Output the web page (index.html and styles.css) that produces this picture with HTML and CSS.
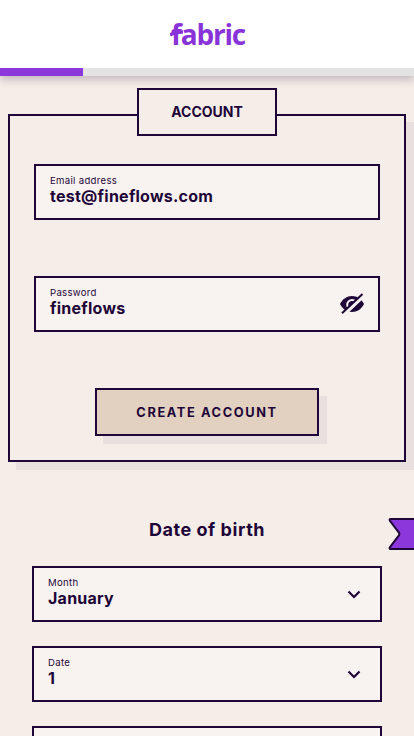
FILE: index.html
```html
<!DOCTYPE html>
<html lang="en">
<head>
  <meta charset="UTF-8">
  <meta name="viewport" content="width=device-width, initial-scale=1.0">
  <title>Create account</title>
  <link rel="stylesheet" href="styles.css">
</head>
<body>
  <header class="header">
    <div class="logo">
      <span class="logo-text">fabric<svg class="logo-bar" width="14" height="8" viewBox="0 0 14 8"><path d="M0 6C3 4 8 3 13 3"/></svg></span>
    </div>
    <div class="progress"><div class="progress-bar"></div></div>
  </header>

  <main>
    <form class="account">
      <h1 class="account-title">ACCOUNT</h1>
      <label class="field">
        <span class="field-label">Email address</span>
        <span class="field-value">test@fineflows.com</span>
      </label>
      <label class="field">
        <span class="field-label">Password</span>
        <span class="field-value">fineflows</span>
        <svg class="eye" width="26" height="22" viewBox="0 0 26 22">
          <path class="eye-shape" d="M1 11C3.500 6 7.800 3 13 3s9.500 3 12 8c-2.500 5-6.800 8-12 8S3.500 16 1 11z"/>
          <path class="eye-ring" d="M9 14.500C6.500 9.500 11 5.500 15.500 7.500"/>
          <path class="eye-gap" d="M4.700 21.500L24.700 2.500"/>
          <path class="eye-slash" d="M3 20.300L23.500 1"/>
        </svg>
      </label>
      <button class="submit" type="button">CREATE ACCOUNT</button>
    </form>

    <section class="birth">
      <div class="birth-head">
        <h2 class="birth-title">Date of birth</h2>
        <svg class="ribbon" width="27" height="34" viewBox="0 0 27 34">
          <path d="M40 2H3.500C2.500 2 2.300 3 3 3.800L11.500 15c1.300 1.500 1.300 2.500 0 4L3 30.200C2.300 31 2.500 32 3.500 32H40z"/>
        </svg>
      </div>
      <label class="field">
        <span class="field-label">Month</span>
        <span class="field-value">January</span>
        <svg class="chevron" width="14" height="10" viewBox="0 0 14 10"><path d="M1.500 2.500L7 8 12.500 2.500"/></svg>
      </label>
      <label class="field">
        <span class="field-label">Date</span>
        <span class="field-value">1</span>
        <svg class="chevron" width="14" height="10" viewBox="0 0 14 10"><path d="M1.500 2.500L7 8 12.500 2.500"/></svg>
      </label>
      <label class="field"></label>
    </section>
  </main>
</body>
</html>
```
FILE: styles.css
```css
* {
  box-sizing: border-box;
}

body {
  margin: 0;
  height: 100vh;
  overflow: hidden;
  background-color: #f5ede8;
  color: #1e0638;
  font-family: Inter, "Liberation Sans", sans-serif;
}

.header {
  background-color: #fff;
  box-shadow: 0 4px 8px rgba(30, 6, 56, 0.22);
}

.logo {
  display: flex;
  justify-content: center;
  height: 68px;
  padding-top: 13px;
}

.logo-text {
  position: relative;
  height: 40px;
  padding-left: 2px;
  color: #8934d9;
  font-family: "Open Sans", sans-serif;
  font-size: 28px;
  font-weight: 700;
  line-height: 42px;
  letter-spacing: -1.2px;
}

.logo-bar {
  position: absolute;
  top: 16px;
  left: 1px;
}

.logo-bar path {
  fill: none;
  stroke: #8934d9;
  stroke-width: 3.5;
}

.progress {
  height: 8px;
  background-color: #e3e3e3;
}

.progress-bar {
  width: 20%;
  height: 8px;
  background-color: #8c37db;
}

.account {
  display: flex;
  flex-direction: column;
  align-items: center;
  height: 348px;
  margin: 38px 8px 0;
  padding: 0 24px;
  border: 2px solid #1e0638;
  box-shadow: 8px 8px 0 #e8dfdf;
}

.account-title {
  flex: none;
  width: 140px;
  height: 48px;
  margin: -28px 0 28px;
  border: 2px solid #1e0638;
  background-color: #f5ede8;
  font-size: 14px;
  font-weight: 700;
  line-height: 44px;
  text-align: center;
}

.field {
  display: block;
  flex: none;
  position: relative;
  width: 100%;
  height: 56px;
  padding: 9px 14px;
  border: 2px solid #1e0638;
  background-color: #f8f2f0;
}

.account .field {
  margin-bottom: 56px;
}

.field-label {
  display: block;
  font-size: 9.6px;
  line-height: 12px;
  letter-spacing: 0.3px;
}

.field-value {
  display: block;
  font-size: 16px;
  font-weight: 700;
  line-height: 18px;
  letter-spacing: 0.25px;
}

.eye {
  position: absolute;
  top: 15px;
  right: 13px;
}

.eye-shape {
  fill: #1e0638;
}

.eye-ring {
  fill: none;
  stroke: #f8f2f0;
  stroke-width: 2;
}

.eye-gap {
  stroke: #f8f2f0;
  stroke-width: 4;
}

.eye-slash {
  stroke: #1e0638;
  stroke-width: 2;
}

.submit {
  flex: none;
  width: 224px;
  height: 48px;
  padding: 0;
  border: 2px solid #1e0638;
  background-color: #e2d0c0;
  box-shadow: 8px 8px 0 #e8dfdf;
  color: #1e0638;
  font-family: inherit;
  font-size: 12.8px;
  font-weight: 700;
  letter-spacing: 1.6px;
}

.birth {
  display: flex;
  flex-direction: column;
  gap: 24px;
  padding: 56px 32px 0;
}

.birth-head {
  position: relative;
  height: 24px;
}

.birth-title {
  margin: 0;
  font-size: 18px;
  font-weight: 700;
  line-height: 24px;
  letter-spacing: 0.55px;
  text-align: center;
}

.ribbon {
  position: absolute;
  top: -1px;
  right: -32px;
}

.ribbon path {
  fill: #8c37db;
  stroke: #1e0638;
  stroke-width: 2;
}

.chevron {
  position: absolute;
  top: 21px;
  right: 19px;
}

.chevron path {
  fill: none;
  stroke: #1e0638;
  stroke-width: 2.2;
}
```
